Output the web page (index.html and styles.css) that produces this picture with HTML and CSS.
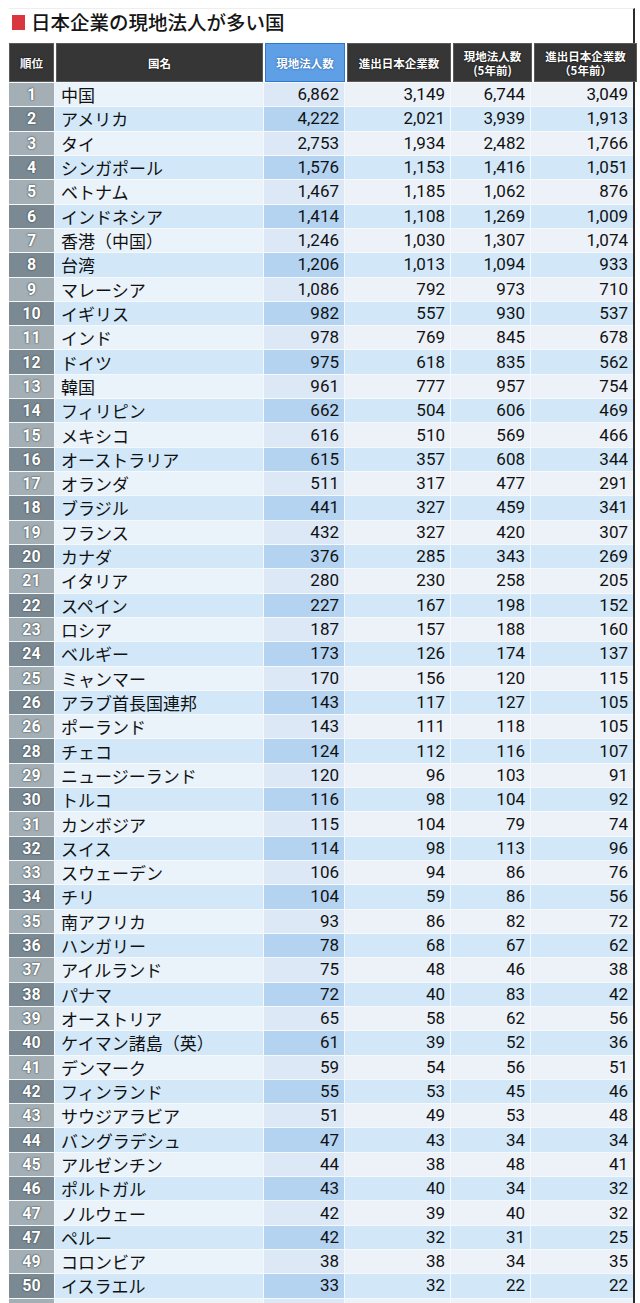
FILE: index.html
```html
<!DOCTYPE html>
<html lang="ja">
<head>
<meta charset="utf-8">
<title>日本企業の現地法人が多い国</title>
<link rel="stylesheet" href="styles.css">
</head>
<body>
<div class="page">
  <h1 class="title"><span class="mark"></span>日本企業の現地法人が多い国</h1>
  <div class="table">
    <div class="row head">
      <div class="h">順位</div>
      <div class="h">国名</div>
      <div class="h hl">現地法人数</div>
      <div class="h">進出日本企業数</div>
      <div class="h">現地法人数<br>(5年前)</div>
      <div class="h">進出日本企業数<br>（5年前）</div>
    </div>
    <div class="row"><div class="rk">1</div><div class="nm">中国</div><div class="n hl">6,862</div><div class="n">3,149</div><div class="n">6,744</div><div class="n">3,049</div></div>
    <div class="row"><div class="rk">2</div><div class="nm">アメリカ</div><div class="n hl">4,222</div><div class="n">2,021</div><div class="n">3,939</div><div class="n">1,913</div></div>
    <div class="row"><div class="rk">3</div><div class="nm">タイ</div><div class="n hl">2,753</div><div class="n">1,934</div><div class="n">2,482</div><div class="n">1,766</div></div>
    <div class="row"><div class="rk">4</div><div class="nm">シンガポール</div><div class="n hl">1,576</div><div class="n">1,153</div><div class="n">1,416</div><div class="n">1,051</div></div>
    <div class="row"><div class="rk">5</div><div class="nm">ベトナム</div><div class="n hl">1,467</div><div class="n">1,185</div><div class="n">1,062</div><div class="n">876</div></div>
    <div class="row"><div class="rk">6</div><div class="nm">インドネシア</div><div class="n hl">1,414</div><div class="n">1,108</div><div class="n">1,269</div><div class="n">1,009</div></div>
    <div class="row"><div class="rk">7</div><div class="nm">香港（中国）</div><div class="n hl">1,246</div><div class="n">1,030</div><div class="n">1,307</div><div class="n">1,074</div></div>
    <div class="row"><div class="rk">8</div><div class="nm">台湾</div><div class="n hl">1,206</div><div class="n">1,013</div><div class="n">1,094</div><div class="n">933</div></div>
    <div class="row"><div class="rk">9</div><div class="nm">マレーシア</div><div class="n hl">1,086</div><div class="n">792</div><div class="n">973</div><div class="n">710</div></div>
    <div class="row"><div class="rk">10</div><div class="nm">イギリス</div><div class="n hl">982</div><div class="n">557</div><div class="n">930</div><div class="n">537</div></div>
    <div class="row"><div class="rk">11</div><div class="nm">インド</div><div class="n hl">978</div><div class="n">769</div><div class="n">845</div><div class="n">678</div></div>
    <div class="row"><div class="rk">12</div><div class="nm">ドイツ</div><div class="n hl">975</div><div class="n">618</div><div class="n">835</div><div class="n">562</div></div>
    <div class="row"><div class="rk">13</div><div class="nm">韓国</div><div class="n hl">961</div><div class="n">777</div><div class="n">957</div><div class="n">754</div></div>
    <div class="row"><div class="rk">14</div><div class="nm">フィリピン</div><div class="n hl">662</div><div class="n">504</div><div class="n">606</div><div class="n">469</div></div>
    <div class="row"><div class="rk">15</div><div class="nm">メキシコ</div><div class="n hl">616</div><div class="n">510</div><div class="n">569</div><div class="n">466</div></div>
    <div class="row"><div class="rk">16</div><div class="nm">オーストラリア</div><div class="n hl">615</div><div class="n">357</div><div class="n">608</div><div class="n">344</div></div>
    <div class="row"><div class="rk">17</div><div class="nm">オランダ</div><div class="n hl">511</div><div class="n">317</div><div class="n">477</div><div class="n">291</div></div>
    <div class="row"><div class="rk">18</div><div class="nm">ブラジル</div><div class="n hl">441</div><div class="n">327</div><div class="n">459</div><div class="n">341</div></div>
    <div class="row"><div class="rk">19</div><div class="nm">フランス</div><div class="n hl">432</div><div class="n">327</div><div class="n">420</div><div class="n">307</div></div>
    <div class="row"><div class="rk">20</div><div class="nm">カナダ</div><div class="n hl">376</div><div class="n">285</div><div class="n">343</div><div class="n">269</div></div>
    <div class="row"><div class="rk">21</div><div class="nm">イタリア</div><div class="n hl">280</div><div class="n">230</div><div class="n">258</div><div class="n">205</div></div>
    <div class="row"><div class="rk">22</div><div class="nm">スペイン</div><div class="n hl">227</div><div class="n">167</div><div class="n">198</div><div class="n">152</div></div>
    <div class="row"><div class="rk">23</div><div class="nm">ロシア</div><div class="n hl">187</div><div class="n">157</div><div class="n">188</div><div class="n">160</div></div>
    <div class="row"><div class="rk">24</div><div class="nm">ベルギー</div><div class="n hl">173</div><div class="n">126</div><div class="n">174</div><div class="n">137</div></div>
    <div class="row"><div class="rk">25</div><div class="nm">ミャンマー</div><div class="n hl">170</div><div class="n">156</div><div class="n">120</div><div class="n">115</div></div>
    <div class="row"><div class="rk">26</div><div class="nm">アラブ首長国連邦</div><div class="n hl">143</div><div class="n">117</div><div class="n">127</div><div class="n">105</div></div>
    <div class="row"><div class="rk">26</div><div class="nm">ポーランド</div><div class="n hl">143</div><div class="n">111</div><div class="n">118</div><div class="n">105</div></div>
    <div class="row"><div class="rk">28</div><div class="nm">チェコ</div><div class="n hl">124</div><div class="n">112</div><div class="n">116</div><div class="n">107</div></div>
    <div class="row"><div class="rk">29</div><div class="nm">ニュージーランド</div><div class="n hl">120</div><div class="n">96</div><div class="n">103</div><div class="n">91</div></div>
    <div class="row"><div class="rk">30</div><div class="nm">トルコ</div><div class="n hl">116</div><div class="n">98</div><div class="n">104</div><div class="n">92</div></div>
    <div class="row"><div class="rk">31</div><div class="nm">カンボジア</div><div class="n hl">115</div><div class="n">104</div><div class="n">79</div><div class="n">74</div></div>
    <div class="row"><div class="rk">32</div><div class="nm">スイス</div><div class="n hl">114</div><div class="n">98</div><div class="n">113</div><div class="n">96</div></div>
    <div class="row"><div class="rk">33</div><div class="nm">スウェーデン</div><div class="n hl">106</div><div class="n">94</div><div class="n">86</div><div class="n">76</div></div>
    <div class="row"><div class="rk">34</div><div class="nm">チリ</div><div class="n hl">104</div><div class="n">59</div><div class="n">86</div><div class="n">56</div></div>
    <div class="row"><div class="rk">35</div><div class="nm">南アフリカ</div><div class="n hl">93</div><div class="n">86</div><div class="n">82</div><div class="n">72</div></div>
    <div class="row"><div class="rk">36</div><div class="nm">ハンガリー</div><div class="n hl">78</div><div class="n">68</div><div class="n">67</div><div class="n">62</div></div>
    <div class="row"><div class="rk">37</div><div class="nm">アイルランド</div><div class="n hl">75</div><div class="n">48</div><div class="n">46</div><div class="n">38</div></div>
    <div class="row"><div class="rk">38</div><div class="nm">パナマ</div><div class="n hl">72</div><div class="n">40</div><div class="n">83</div><div class="n">42</div></div>
    <div class="row"><div class="rk">39</div><div class="nm">オーストリア</div><div class="n hl">65</div><div class="n">58</div><div class="n">62</div><div class="n">56</div></div>
    <div class="row"><div class="rk">40</div><div class="nm">ケイマン諸島（英）</div><div class="n hl">61</div><div class="n">39</div><div class="n">52</div><div class="n">36</div></div>
    <div class="row"><div class="rk">41</div><div class="nm">デンマーク</div><div class="n hl">59</div><div class="n">54</div><div class="n">56</div><div class="n">51</div></div>
    <div class="row"><div class="rk">42</div><div class="nm">フィンランド</div><div class="n hl">55</div><div class="n">53</div><div class="n">45</div><div class="n">46</div></div>
    <div class="row"><div class="rk">43</div><div class="nm">サウジアラビア</div><div class="n hl">51</div><div class="n">49</div><div class="n">53</div><div class="n">48</div></div>
    <div class="row"><div class="rk">44</div><div class="nm">バングラデシュ</div><div class="n hl">47</div><div class="n">43</div><div class="n">34</div><div class="n">34</div></div>
    <div class="row"><div class="rk">45</div><div class="nm">アルゼンチン</div><div class="n hl">44</div><div class="n">38</div><div class="n">48</div><div class="n">41</div></div>
    <div class="row"><div class="rk">46</div><div class="nm">ポルトガル</div><div class="n hl">43</div><div class="n">40</div><div class="n">34</div><div class="n">32</div></div>
    <div class="row"><div class="rk">47</div><div class="nm">ノルウェー</div><div class="n hl">42</div><div class="n">39</div><div class="n">40</div><div class="n">32</div></div>
    <div class="row"><div class="rk">47</div><div class="nm">ペルー</div><div class="n hl">42</div><div class="n">32</div><div class="n">31</div><div class="n">25</div></div>
    <div class="row"><div class="rk">49</div><div class="nm">コロンビア</div><div class="n hl">38</div><div class="n">38</div><div class="n">34</div><div class="n">35</div></div>
    <div class="row"><div class="rk">50</div><div class="nm">イスラエル</div><div class="n hl">33</div><div class="n">32</div><div class="n">22</div><div class="n">22</div></div>
    <div class="row"><div class="rk"></div><div class="nm"></div><div class="n hl"></div><div class="n"></div><div class="n"></div><div class="n"></div></div>
  </div>
</div>
</body>
</html>
```
FILE: styles.css
```css
html, body {
  margin: 0;
  padding: 0;
  background: #ffffff;
}
body {
  font-family: "Noto Sans CJK JP", "Noto Sans", sans-serif;
  color: #111;
}
.page {
  margin: 8px 5px 0 9px;
  border-right: 2px solid #2c2c2c;
  border-top: 1px solid #eeeeee;
}
.title {
  margin: 0;
  height: 34px;
  box-sizing: border-box;
  padding: 0 0 8px 3px;
  display: flex;
  align-items: center;
  font-size: 19.5px;
  font-weight: 500;
  color: #151515;
  gap: 6px;
  line-height: 1;
}
.mark {
  display: inline-block;
  width: 13px;
  height: 15px;
  background: #d9363e;
}
.table {
  display: flex;
  flex-direction: column;
  gap: 1px;
  background: #f6f9fc;
}
.row {
  display: grid;
  grid-template-columns: 45px 208px 80px 105px 79px 102px;
  column-gap: 1px;
  height: 23.32px;
}
.row.head {
  height: 39px;
  column-gap: 2px;
  background: #ffffff;
  grid-template-columns: 45px 207px 80px 104px 79px 103px;
}
.h {
  background: #363636;
  border: 1px solid #5a5a5a;
  color: #fff;
  font-size: 11.5px;
  font-weight: 700;
  line-height: 14px;
  display: flex;
  align-items: center;
  justify-content: center;
  text-align: center;
  white-space: nowrap;
  text-shadow: 0 0 2px #000;
}
.h.hl {
  background: #5e9fe6;
  border: 1px solid #2f78d2;
  text-shadow: 0 0 2px #1a4f90;
}
.rk {
  background: #a4afb5;
  color: #fff;
  font-family: "Roboto", "Liberation Sans", sans-serif;
  font-weight: 700;
  font-size: 16px;
  display: flex;
  align-items: center;
  justify-content: center;
  text-shadow: 0 0 2px #3a444a, 0 0 1px #3a444a;
}
.nm {
  background: #eaf2fa;
  font-size: 17px;
  display: flex;
  align-items: center;
  padding-left: 6px;
  white-space: nowrap;
  line-height: 1;
}
.n {
  background: #edf2f9;
  font-family: "Roboto", "Liberation Sans", sans-serif;
  font-size: 17px;
  display: flex;
  align-items: center;
  justify-content: flex-end;
  padding-right: 5px;
  line-height: 1;
}
.n.hl {
  background: #dde8f7;
}
.row:nth-child(odd) .rk {
  background: #7b8992;
}
.row:nth-child(odd) .nm,
.row:nth-child(odd) .n {
  background: #d2e8f8;
}
.row:nth-child(odd) .n.hl {
  background: #b4d3f1;
}
```
